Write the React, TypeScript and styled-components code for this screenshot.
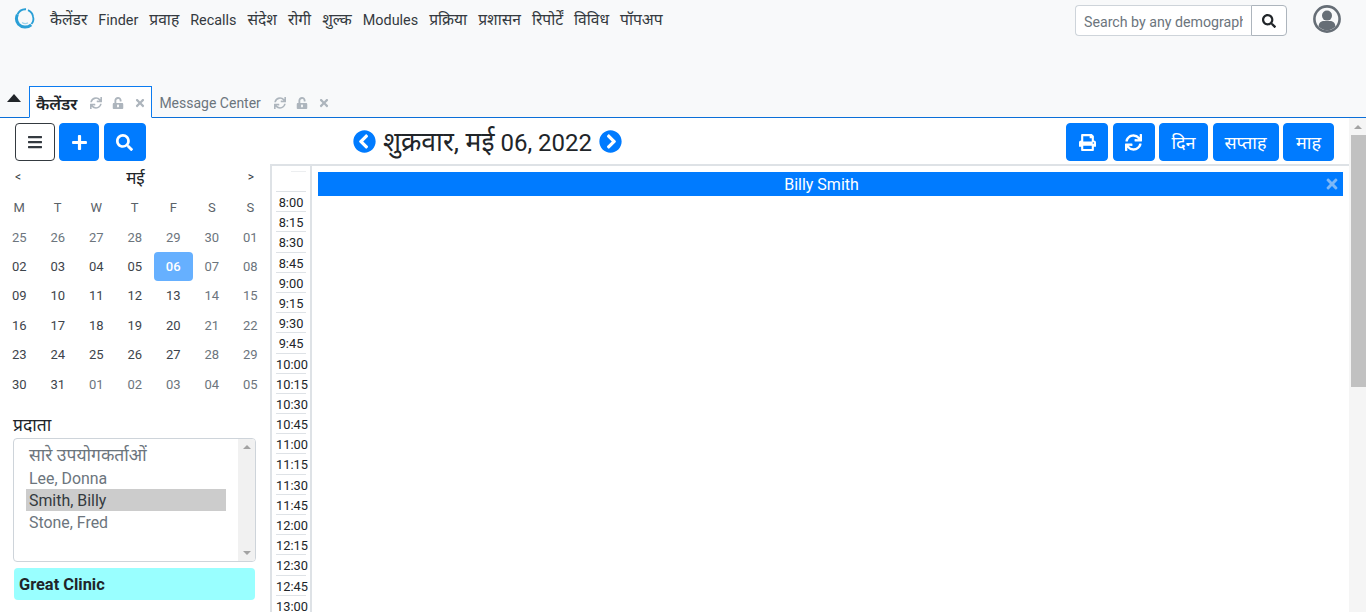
import React from 'react';
import styled, { createGlobalStyle } from 'styled-components';
import {
    FaBars, FaChevronCircleLeft, FaChevronCircleRight, FaPlus, FaPrint,
    FaSearch, FaSync, FaTimes, FaUnlockAlt,
} from 'react-icons/fa';

const GlobalStyle = createGlobalStyle`
    html, body {
        margin: 0;
        height: 100%;
        overflow: hidden;
        background: #fff;
    }
    body {
        font-family: Roboto, "Noto Sans", sans-serif;
        color: #212529;
    }
    * {
        box-sizing: border-box;
    }
`;

const menuItems = [
    { label: 'कैलेंडर', hindi: true }, { label: 'Finder' }, { label: 'प्रवाह', hindi: true }, { label: 'Recalls' },
    { label: 'संदेश', hindi: true }, { label: 'रोगी', hindi: true }, { label: 'शुल्क', hindi: true }, { label: 'Modules' },
    { label: 'प्रक्रिया', hindi: true }, { label: 'प्रशासन', hindi: true }, { label: 'रिपोर्टें', hindi: true },
    { label: 'विविध', hindi: true }, { label: 'पॉपअप', hindi: true },
];
const weekDays = ['M', 'T', 'W', 'T', 'F', 'S', 'S'];
const days = [
    '25', '26', '27', '28', '29', '30', '01',
    '02', '03', '04', '05', '06', '07', '08',
    '09', '10', '11', '12', '13', '14', '15',
    '16', '17', '18', '19', '20', '21', '22',
    '23', '24', '25', '26', '27', '28', '29',
    '30', '31', '01', '02', '03', '04', '05',
];
const times = [
    '8:00', '8:15', '8:30', '8:45', '9:00', '9:15', '9:30', '9:45',
    '10:00', '10:15', '10:30', '10:45', '11:00', '11:15', '11:30', '11:45',
    '12:00', '12:15', '12:30', '12:45', '13:00',
];

export default function App() {
    return (
        <>
            <GlobalStyle />
            <Page>
                <Header>
                    <TopBar>
                        <Logo viewBox="0 0 22 22">
                            <path d="M12 2.2a8.8 8.8 0 0 0-8.6 5.4" fill="none" stroke="#2a9fd6" strokeWidth="2" />
                            <path d="M3.4 7.6a9 9 0 0 0 1.2 9.6a9 9 0 0 0 12.6 .6" fill="none" stroke="#2a9fd6" strokeWidth="3" />
                            <path d="M14 3.2a8.4 8.4 0 0 1 5 6.2a8 8 0 0 1-1.6 7.6" fill="none" stroke="#2a9fd6" strokeWidth="1.8" />
                            <path d="M8 15.5a6 6 0 0 0 6 .4" fill="none" stroke="#9fd3ea" strokeWidth="1.2" />
                        </Logo>
                        <Menu>
                            {menuItems.map((item) => (
                                <MenuItem key={item.label} $hindi={item.hindi}>{item.label}</MenuItem>
                            ))}
                        </Menu>
                        <SearchGroup>
                            <SearchInput placeholder="Search by any demographics" />
                            <SearchButton><FaSearch /></SearchButton>
                        </SearchGroup>
                        <Avatar viewBox="0 0 28 28">
                            <circle cx="14" cy="14" r="12.6" fill="#f8f9fa" stroke="#666e76" strokeWidth="2.6" />
                            <circle cx="14" cy="10.6" r="5" fill="#666e76" />
                            <path d="M5.6 21.5c0-3.6 2.8-5.4 5.4-5.4h6c2.6 0 5.4 1.8 5.4 5.4a11.4 11.4 0 0 1-16.8 0z" fill="#666e76" />
                        </Avatar>
                    </TopBar>
                    <TabBar>
                        <Caret />
                        <Tab $active>
                            <TabTitle $active>कैलेंडर</TabTitle>
                            <TabIcons />
                        </Tab>
                        <Tab>
                            <TabTitle>Message Center</TabTitle>
                            <TabIcons />
                        </Tab>
                    </TabBar>
                </Header>
                <Body>
                    <Sidebar>
                        <SideButtons>
                            <OutlineButton><FaBars /></OutlineButton>
                            <BlueButton $width={40}><FaPlus /></BlueButton>
                            <BlueButton $width={42}><FaSearch /></BlueButton>
                        </SideButtons>
                        <MonthRow>
                            <MonthArrow>&lt;</MonthArrow>
                            <MonthName>मई</MonthName>
                            <MonthArrow>&gt;</MonthArrow>
                        </MonthRow>
                        <CalendarGrid>
                            {weekDays.map((d, i) => (
                                <WeekDay key={i}>{d}</WeekDay>
                            ))}
                            {days.map((d, i) => {
                                const muted = i < 7 || i >= 37 || i % 7 >= 5;
                                return (
                                    <Day key={i} $muted={muted} $selected={i === 11}>{d}</Day>
                                );
                            })}
                        </CalendarGrid>
                        <ProviderLabel>प्रदाता</ProviderLabel>
                        <ProviderList>
                            <ProviderOptions>
                                <ProviderOption $large>सारे उपयोगकर्ताओं</ProviderOption>
                                <ProviderOption>Lee, Donna</ProviderOption>
                                <ProviderOption $selected>Smith, Billy</ProviderOption>
                                <ProviderOption>Stone, Fred</ProviderOption>
                            </ProviderOptions>
                            <ListScroll>
                                <ArrowUp />
                                <ArrowDown />
                            </ListScroll>
                        </ProviderList>
                        <ClinicBox>Great Clinic</ClinicBox>
                    </Sidebar>
                    <Main>
                        <Toolbar>
                            <DateNav>
                                <NavIcon><FaChevronCircleLeft /></NavIcon>
                                <DateTitle>
                                    <HindiPart>शुक्रवार, मई</HindiPart> 06, 2022
                                </DateTitle>
                                <NavIcon><FaChevronCircleRight /></NavIcon>
                            </DateNav>
                            <ToolButtons>
                                <BlueButton $width={42}><FaPrint /></BlueButton>
                                <BlueButton $width={42}><FaSync /></BlueButton>
                                <BlueButton $width={49} $text>दिन</BlueButton>
                                <BlueButton $width={66} $text>सप्ताह</BlueButton>
                                <BlueButton $width={51} $text>माह</BlueButton>
                            </ToolButtons>
                        </Toolbar>
                        <Schedule>
                            <TimeColumn>
                                <TimeHeader><TimeHeaderLine /></TimeHeader>
                                {times.map((t) => (
                                    <TimeCell key={t}>{t}</TimeCell>
                                ))}
                            </TimeColumn>
                            <Columns>
                                <ProviderBanner>
                                    Billy Smith
                                    <BannerClose><FaTimes /></BannerClose>
                                </ProviderBanner>
                            </Columns>
                        </Schedule>
                    </Main>
                    <PageScroll>
                        <ArrowUp />
                        <PageThumb />
                    </PageScroll>
                </Body>
            </Page>
        </>
    );
}

const TabIcons = () => (
    <TabIconRow>
        <FaSync />
        <FaUnlockAlt />
        <FaTimes />
    </TabIconRow>
);

const Page = styled.div`
    width: 1366px;
    height: 612px;
    overflow: hidden;
    display: flex;
    flex-direction: column;
`;

const Header = styled.header`
    height: 118px;
    background: #f8f9fa;
    border-bottom: 1px solid #0b6fd8;
    display: flex;
    flex-direction: column;
    justify-content: space-between;
`;

const TopBar = styled.div`
    display: flex;
    align-items: flex-start;
    padding: 5px 25px 0 14px;
`;

const Logo = styled.svg`
    width: 22px;
    height: 22px;
    margin-top: 2px;
    flex-shrink: 0;
`;

const Menu = styled.nav`
    display: flex;
    align-items: baseline;
    gap: 11px;
    margin-left: 14px;
    flex: 1;
    padding-top: 3px;
`;

const MenuItem = styled.a<{ $hindi?: boolean }>`
    font-size: ${(p) => (p.$hindi ? '15.6px' : '14.4px')};
    line-height: 24px;
    color: #343a40;
`;

const SearchGroup = styled.div`
    display: flex;
    width: 212px;
    height: 31px;
`;

const SearchInput = styled.input`
    flex: 1;
    min-width: 0;
    border: 1px solid #ced4da;
    border-right: none;
    border-radius: 4px 0 0 4px;
    padding: 2px 8px 0;
    font-family: inherit;
    font-size: 14.2px;
    background: #fff;
    &::placeholder {
        color: #6c757d;
    }
`;

const SearchButton = styled.button`
    width: 36px;
    border: 1px solid #adb5bd;
    border-radius: 0 4px 4px 0;
    background: #fff;
    color: #212529;
    font-size: 14px;
    display: flex;
    align-items: center;
    justify-content: center;
    padding: 0;
`;

const Avatar = styled.svg`
    width: 28px;
    height: 28px;
    margin-left: 26px;
    flex-shrink: 0;
`;

const TabBar = styled.div`
    display: flex;
    align-items: flex-end;
    padding-left: 7px;
    height: 32px;
`;

const Caret = styled.span`
    width: 0;
    height: 0;
    border-left: 7px solid transparent;
    border-right: 7px solid transparent;
    border-bottom: 8px solid #212529;
    align-self: flex-start;
    margin: 9px 8px 0 0;
`;

const Tab = styled.div<{ $active?: boolean }>`
    height: 32px;
    margin-bottom: -1px;
    display: flex;
    align-items: center;
    padding: 2px 5px 0 6px;
    gap: 13px;
    background: ${(p) => (p.$active ? '#fff' : 'transparent')};
    border: 1px solid ${(p) => (p.$active ? '#0b7bf0' : 'transparent')};
    border-bottom-color: ${(p) => (p.$active ? '#fff' : 'transparent')};
`;

const TabTitle = styled.span<{ $active?: boolean }>`
    font-size: ${(p) => (p.$active ? '16.5px' : '14px')};
    font-weight: ${(p) => (p.$active ? 600 : 400)};
    color: ${(p) => (p.$active ? '#212529' : '#6c757d')};
`;

const TabIconRow = styled.span`
    display: flex;
    align-items: center;
    gap: 10px;
    color: #adb5bd;
    font-size: 12px;
`;

const Body = styled.div`
    flex: 1;
    min-height: 0;
    display: flex;
`;

const Sidebar = styled.aside`
    width: 270px;
    flex-shrink: 0;
    display: flex;
    flex-direction: column;
`;

const SideButtons = styled.div`
    display: flex;
    gap: 4.4px;
    padding: 5px 0 0 15px;
`;

const ButtonBase = styled.button`
    height: 38px;
    border-radius: 4px;
    font-family: inherit;
    font-size: 16px;
    display: flex;
    align-items: center;
    justify-content: center;
    padding: 0;
`;

const OutlineButton = styled(ButtonBase)`
    width: 40px;
    background: #fff;
    border: 1px solid #343a40;
    color: #343a40;
`;

const BlueButton = styled(ButtonBase)<{ $width: number; $text?: boolean }>`
    width: ${(p) => p.$width}px;
    background: #007bff;
    border: 1px solid #007bff;
    color: #fff;
    font-size: ${(p) => (p.$text ? '18px' : '17px')};
`;

const MonthRow = styled.div`
    height: 32px;
    display: flex;
    align-items: center;
    justify-content: space-between;
    padding: 0 16px 0 15px;
`;

const MonthArrow = styled.span`
    font-size: 12px;
    color: #343a40;
`;

const MonthName = styled.span`
    margin-left: 2px;
    font-size: 17px;
    color: #212529;
`;

const CalendarGrid = styled.div`
    display: grid;
    grid-template-columns: repeat(7, 38.5px);
    grid-auto-rows: 29.4px;
`;

const WeekDay = styled.div`
    display: flex;
    align-items: center;
    justify-content: center;
    font-size: 13px;
    color: #5a6268;
`;

const Day = styled.div<{ $muted?: boolean; $selected?: boolean }>`
    display: flex;
    align-items: center;
    justify-content: center;
    font-size: 13px;
    border-radius: 4px;
    color: ${(p) => (p.$selected ? '#fff' : p.$muted ? '#6c757d' : '#3d444b')};
    background: ${(p) => (p.$selected ? '#66b0ff' : 'transparent')};
    font-weight: ${(p) => (p.$selected ? 500 : 400)};
`;

const ProviderLabel = styled.label`
    margin: 14px 0 0 13px;
    font-size: 17.5px;
    line-height: 24px;
    color: #212529;
`;

const ProviderList = styled.div`
    margin: 1px 0 0 13px;
    width: 243px;
    height: 124px;
    border: 1px solid #ced4da;
    border-radius: 4px;
    display: flex;
    background: #fff;
    overflow: hidden;
`;

const ProviderOptions = styled.ul`
    list-style: none;
    margin: 0;
    padding: 4px 0 0 12px;
    width: 212px;
`;

const ProviderOption = styled.li<{ $large?: boolean; $selected?: boolean }>`
    height: ${(p) => (p.$large ? '24px' : '22px')};
    line-height: ${(p) => (p.$large ? '25px' : '23px')};
    font-size: ${(p) => (p.$large ? '17.5px' : '15.9px')};
    padding-left: 3px;
    white-space: nowrap;
    color: ${(p) => (p.$selected ? '#343a40' : '#6c757d')};
    background: ${(p) => (p.$selected ? '#cccccc' : 'transparent')};
`;

const ListScroll = styled.div`
    margin-left: auto;
    width: 17px;
    background: #f1f1f1;
    display: flex;
    flex-direction: column;
    align-items: center;
    justify-content: space-between;
    padding: 6px 0;
`;

const ArrowUp = styled.span`
    width: 0;
    height: 0;
    border-left: 4px solid transparent;
    border-right: 4px solid transparent;
    border-bottom: 4px solid #a3a3a3;
`;

const ArrowDown = styled.span`
    width: 0;
    height: 0;
    border-left: 4px solid transparent;
    border-right: 4px solid transparent;
    border-top: 4px solid #a3a3a3;
`;

const ClinicBox = styled.div`
    margin: 6px 0 0 14px;
    width: 241px;
    height: 32px;
    background: #99ffff;
    border-radius: 4px;
    padding-left: 5px;
    font-size: 16.4px;
    font-weight: 700;
    line-height: 33px;
    color: #212529;
`;

const Main = styled.main`
    flex: 1;
    min-width: 0;
    display: flex;
    flex-direction: column;
`;

const Toolbar = styled.div`
    height: 46px;
    padding: 5px 15px 0 83px;
    display: flex;
    align-items: flex-start;
    justify-content: space-between;
`;

const DateNav = styled.div`
    display: flex;
    align-items: center;
    height: 36px;
    gap: 7px;
`;

const NavIcon = styled.span`
    color: #007bff;
    font-size: 23px;
    line-height: 0;
`;

const DateTitle = styled.h2`
    margin: 0;
    font-size: 24px;
    font-weight: 400;
    color: #212529;
`;

const HindiPart = styled.span`
    font-size: 26.5px;
`;

const ToolButtons = styled.div`
    display: flex;
    gap: 4.5px;
`;

const Schedule = styled.div`
    flex: 1;
    min-height: 0;
    display: flex;
    border-top: 2px solid #dee2e6;
    overflow: hidden;
`;

const TimeColumn = styled.div`
    width: 42px;
    flex-shrink: 0;
    border-left: 2px solid #dee2e6;
    border-right: 2px solid #dee2e6;
    padding-left: 4px;
`;

const TimeHeader = styled.div`
    height: 25px;
    padding: 5px 0 0 15px;
`;

const TimeHeaderLine = styled.div`
    width: 15px;
    height: 1px;
    background: #eceef0;
`;

const TimeCell = styled.div`
    width: 30px;
    height: 20.2px;
    border-top: 1px solid #dee2e6;
    font-size: 12.8px;
    line-height: 21.5px;
    text-align: center;
    white-space: nowrap;
    color: #212529;
`;

const Columns = styled.div`
    flex: 1;
    min-width: 0;
    padding: 6px 6px 0;
`;

const ProviderBanner = styled.div`
    position: relative;
    height: 24px;
    padding-right: 18px;
    background: #007bff;
    color: #fff;
    font-size: 16px;
    line-height: 25px;
    text-align: center;
`;

const BannerClose = styled.span`
    position: absolute;
    right: 3px;
    top: 4px;
    font-size: 16px;
    display: flex;
    color: #7db8f7;
`;

const PageScroll = styled.div`
    width: 17px;
    flex-shrink: 0;
    background: #f5f5f5;
    display: flex;
    flex-direction: column;
    align-items: center;
    padding-top: 7px;
`;

const PageThumb = styled.div`
    align-self: flex-end;
    width: 15px;
    height: 252px;
    margin-top: 6px;
    background: #c1c1c1;
`;
